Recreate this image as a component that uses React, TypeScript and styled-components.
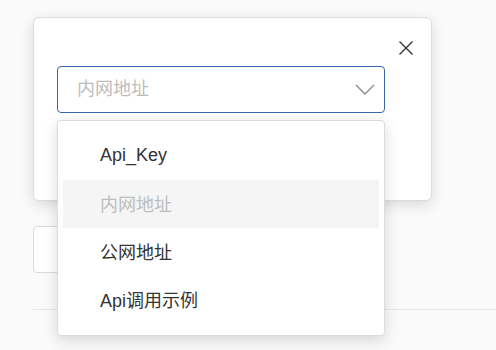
import { useState } from 'react';
import styled, { createGlobalStyle } from 'styled-components';

const GlobalStyle = createGlobalStyle`
  html, body {
    margin: 0;
    padding: 0;
    background: #fafafa;
    font-family: 'Liberation Sans', 'Noto Sans CJK SC', sans-serif;
  }
`;

const options = [
  { label: 'Api_Key', disabled: false },
  { label: '内网地址', disabled: true },
  { label: '公网地址', disabled: false },
  { label: 'Api调用示例', disabled: false },
];

export default function App() {
  const [value] = useState('内网地址');

  return (
    <PageStyled>
      <GlobalStyle />
      <FieldBox />
      <Divider />

      <ModalStyled>
        <CloseButton aria-label="close">
          <svg width="16" height="16" viewBox="0 0 16 16">
            <path d="M1.5 1.5 L14.5 14.5 M14.5 1.5 L1.5 14.5" stroke="#333" strokeWidth="1.4" fill="none" />
          </svg>
        </CloseButton>

        <SelectWrap>
          <SelectBox>
            <Placeholder>{value}</Placeholder>
            <svg width="20" height="11" viewBox="0 0 20 11">
              <path d="M1 1 L10 10 L19 1" stroke="#8a8a8a" strokeWidth="1.4" fill="none" />
            </svg>
          </SelectBox>

          <Dropdown>
            {options.map((o) => (
              <Option key={o.label} disabled={o.disabled}>
                {o.label}
              </Option>
            ))}
          </Dropdown>
        </SelectWrap>
      </ModalStyled>
    </PageStyled>
  );
}

const PageStyled = styled.div`
  position: relative;
  width: 496px;
  height: 350px;
  overflow: hidden;
  padding: 226px 0 0 33px;
  box-sizing: border-box;
`;

const FieldBox = styled.div`
  width: 300px;
  height: 47px;
  box-sizing: border-box;
  border: 1px solid #dadada;
  border-radius: 4px;
  background: #fff;
`;

const Divider = styled.div`
  margin-top: 36px;
  border-top: 1px solid #e6e6e6;
`;

const ModalStyled = styled.div`
  position: absolute;
  left: 33px;
  top: 17px;
  width: 399px;
  height: 184px;
  box-sizing: border-box;
  padding: 48px 46px 0 23px;
  background: #fff;
  border: 1px solid #dcdcdc;
  border-radius: 6px;
  box-shadow: 0 4px 14px rgba(0, 0, 0, 0.13);
`;

const CloseButton = styled.button`
  position: absolute;
  top: 22px;
  right: 17px;
  width: 16px;
  height: 16px;
  padding: 0;
  border: none;
  background: none;
  display: flex;
`;

const SelectWrap = styled.div`
  position: relative;
`;

const SelectBox = styled.div`
  height: 47px;
  box-sizing: border-box;
  border: 1px solid #3766ab;
  border-radius: 4px;
  padding: 0 9px 0 19px;
  display: flex;
  align-items: center;
  justify-content: space-between;
  background: #fff;
`;

const Placeholder = styled.span`
  font-size: 18px;
  line-height: 1;
  margin-top: -2px;
  color: #bdbdbd;
`;

const Dropdown = styled.div`
  position: absolute;
  top: calc(100% + 7px);
  left: 0;
  right: 0;
  box-sizing: border-box;
  padding: 11px 5px;
  background: #fff;
  border: 1px solid #dcdcdc;
  border-radius: 4px;
  box-shadow: 0 4px 14px rgba(0, 0, 0, 0.15);
  z-index: 2;
`;

const Option = styled.div<{ disabled: boolean }>`
  height: 48px;
  box-sizing: border-box;
  padding: 0 0 2px 37px;
  display: flex;
  align-items: center;
  font-size: 18px;
  color: ${({ disabled }) => (disabled ? '#bdbdbd' : '#333')};
  background: ${({ disabled }) => (disabled ? '#f5f5f5' : 'transparent')};
`;
